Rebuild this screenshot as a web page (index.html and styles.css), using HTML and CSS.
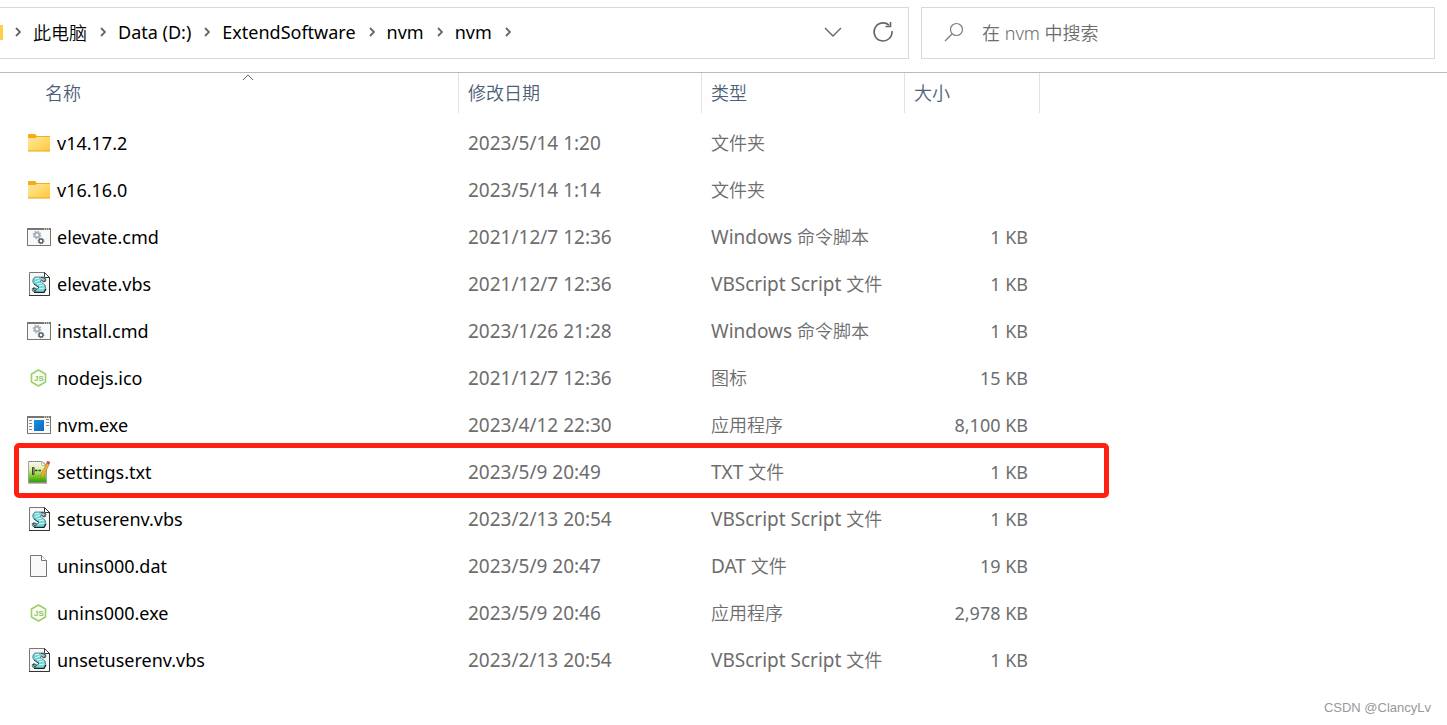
FILE: index.html
```html
<!DOCTYPE html>
<html lang="zh-CN">
<head>
<meta charset="utf-8">
<meta name="viewport" content="width=device-width, initial-scale=1">
<title>nvm</title>
<link rel="stylesheet" href="styles.css">
</head>
<body>
<svg class="sprite" aria-hidden="true">
  <defs>
    <linearGradient id="folder-fill" x1="0" y1="0" x2="1" y2="1">
      <stop offset="0" stop-color="#ffe9a3"/><stop offset="1" stop-color="#ffc937"/>
    </linearGradient>
    <linearGradient id="exe-fill" x1="0" y1="0" x2="1" y2="1">
      <stop offset="0" stop-color="#1f8fe6"/><stop offset="1" stop-color="#0b66b8"/>
    </linearGradient>
    <linearGradient id="note-fill" x1="0" y1="0" x2="0" y2="1">
      <stop offset="0" stop-color="#f8faf2"/><stop offset=".35" stop-color="#e0efb0"/><stop offset=".65" stop-color="#8ad02f"/><stop offset="1" stop-color="#2c9a0c"/>
    </linearGradient>
  </defs>
  <symbol id="folder" viewBox="0 0 24 24">
    <path d="M1 4Q1 3 2 3H8L10 5H23V10H1Z" fill="#f5ad17"/>
    <path d="M1 7H8L10 6H23V20H1Z" fill="url(#folder-fill)"/>
    <path d="M1 19.5H23V20.5H1Z" fill="#e5a41b"/>
  </symbol>
  <symbol id="cmd" viewBox="0 0 24 24">
    <rect x=".5" y="3.5" width="23" height="17" fill="#f9f9f9" stroke="#777770"/>
    <path d="M0 3H24V5H0Z" fill="#777770"/>
    <path d="M17 4H18M19 4H20M21 4H22" stroke="#fff"/>
    <circle cx="10" cy="10" r="2.4" fill="none" stroke="#a3adb7" stroke-width="1.8"/>
    <circle cx="10" cy="10" r="3.7" fill="none" stroke="#a3adb7" stroke-width="1.2" stroke-dasharray="1.5 1.4"/>
    <circle cx="14" cy="16" r="2" fill="none" stroke="#55606b" stroke-width="1.4"/>
    <circle cx="14" cy="16" r="2.9" fill="none" stroke="#55606b" stroke-width=".8" stroke-dasharray="1.1 1.18"/>
  </symbol>
  <symbol id="vbs" viewBox="0 0 24 24">
    <path d="M2.5.5H17.5L22.5 5.5V23.5H2.5Z" fill="#f8f8f8" stroke="#777"/>
    <path d="M22.5 5V23.5H2" fill="none" stroke="#333"/>
    <path d="M17.5.5V5.5H22.5Z" fill="#fff" stroke="#333"/>
    <path d="M8 5H16Q19 5 19 8Q19 10 17 10L15 8.5L13 9.5L18 13Q20 16 17 20H8Q5 20 5 17Q6 15 8 16L10 17L12 15.5L7 12Q4 8 8 5Z" fill="#67d8da" stroke="#596b6d" stroke-width=".8"/>
    <path d="M8 7L12 6M8 10L13 8M10 12L15 11M12 14L17 13M12 17L17 16" stroke="#dffcff"/>
    <path d="M14 5.5Q17 5 18.5 7.5L17 10L14.5 8M6 16.5Q7.5 15.5 9.5 17.5L8 19.5Z" fill="#b9b9b9" stroke="#303a3c" stroke-width=".9"/>
    <path d="M7 20.5H17L19 17" fill="none" stroke="#172023" stroke-width="1.2"/>
    <path d="M7 12L12 15.5" stroke="#172023" stroke-width=".7"/>
  </symbol>
  <symbol id="exe" viewBox="0 0 24 24">
    <rect x=".5" y="3.5" width="23" height="17" fill="#f9f9f9" stroke="#777770"/>
    <path d="M0 3H24V5H0Z" fill="#777770"/>
    <path d="M17 4H18M19 4H20M21 4H22" stroke="#fff"/>
    <rect x="7" y="7" width="10" height="11" fill="url(#exe-fill)"/>
    <path d="M2 7.5H5M2 10.5H5M2 13.5H5M2 16.5H5M19 6.5H22M19 9.5H22M19 12.5H22" stroke="#8a8a8a"/>
  </symbol>
  <symbol id="note" viewBox="0 0 24 24">
    <path d="M1.5 1.5H15L19.5 5V22.5H1.5Z" fill="url(#note-fill)" stroke="#a2a69c"/>
    <path d="M2 1.5H14" stroke="#777" stroke-dasharray="1 1"/>
    <path d="M14 1.5L15 5.5H19Z" fill="#fff" stroke="#aaa" stroke-width=".8"/>
    <path d="M1 23H20" stroke="#777"/>
    <path d="M7 7.5H5.5V14.5H7Z" fill="none" stroke="#383b32"/>
    <path d="M8 10.5H10.5M11.5 10.5H14" stroke="#383b32" stroke-width="1.3"/>
    <path d="M20.5 1.5L23 2.5L16.5 16L14 18.5V15Z" fill="#f3b32d" stroke="#ad6f18" stroke-width=".6"/>
    <path d="M20.5 1L23 2L22 4.5L19.5 3Z" fill="#a85550"/>
  </symbol>
  <symbol id="page" viewBox="0 0 24 24">
    <path d="M3.5 1.5H14.5L19.5 6.5V22.5H3.5Z" fill="#f9f9f9" stroke="#77776f"/>
    <path d="M14.5 1.5V6.5H19.5" fill="#fff" stroke="#77776f"/>
  </symbol>
  <symbol id="chevron" viewBox="0 0 6 10">
    <path d="M1 1L5 5L1 9" fill="none" stroke="#666" stroke-width="1.8"/>
  </symbol>
</svg>

<header class="toolbar">
  <nav class="address" aria-label="路径">
    <span class="root"></span>
    <ol class="crumbs">
      <li><svg class="sep"><use href="#chevron"/></svg><button class="crumb"><span class="zh">此电脑</span></button></li>
      <li><svg class="sep"><use href="#chevron"/></svg><button class="crumb">Data (D:)</button></li>
      <li><svg class="sep"><use href="#chevron"/></svg><button class="crumb">ExtendSoftware</button></li>
      <li><svg class="sep"><use href="#chevron"/></svg><button class="crumb">nvm</button></li>
      <li><svg class="sep"><use href="#chevron"/></svg><button class="crumb">nvm</button></li>
      <li><svg class="sep"><use href="#chevron"/></svg></li>
    </ol>
    <button class="tool" aria-label="历史记录">
      <svg width="24" height="24" viewBox="0 0 24 24"><path d="M4 8L12 16L20 8" fill="none" stroke="#666" stroke-width="1.4"/></svg>
    </button>
    <button class="tool" aria-label="刷新">
      <svg width="24" height="24" viewBox="0 0 24 24" fill="none" stroke="#666" stroke-width="1.6"><path d="M18 5.2A9 9 0 1 0 21 11"/><path d="M19.5 2V6.5H14.5"/></svg>
    </button>
  </nav>
  <label class="search">
    <svg width="24" height="24" viewBox="0 0 24 24" fill="none" stroke="#7c7c80" stroke-width="1.2"><circle cx="14.5" cy="8.5" r="6"/><path d="M10 13L3 20"/></svg>
    <input class="query" type="text" placeholder="在 nvm 中搜索" aria-label="搜索">
  </label>
</header>

<main class="listing">
  <table class="files">
    <colgroup><col class="col-name"><col class="col-date"><col class="col-type"><col class="col-size"></colgroup>
    <thead>
      <tr>
        <th aria-sort="ascending"><div class="head head-name">名称<svg class="sort" width="12" height="7" viewBox="0 0 12 7"><path d="M1 6L6 1L11 6" fill="none" stroke="#666"/></svg></div></th>
        <th><div class="head">修改日期</div></th>
        <th><div class="head">类型</div></th>
        <th><div class="head">大小</div></th>
      </tr>
    </thead>
    <tbody>
      <tr><td><div class="file"><svg class="icon"><use href="#folder"/></svg>v14.17.2</div></td><td>2023/5/14 1:20</td><td><span class="zh">文件夹</span></td><td></td></tr>
      <tr><td><div class="file"><svg class="icon"><use href="#folder"/></svg>v16.16.0</div></td><td>2023/5/14 1:14</td><td><span class="zh">文件夹</span></td><td></td></tr>
      <tr><td><div class="file"><svg class="icon"><use href="#cmd"/></svg>elevate.cmd</div></td><td>2021/12/7 12:36</td><td>Windows <span class="zh">命令脚本</span></td><td>1 KB</td></tr>
      <tr><td><div class="file"><svg class="icon"><use href="#vbs"/></svg>elevate.vbs</div></td><td>2021/12/7 12:36</td><td>VBScript Script <span class="zh">文件</span></td><td>1 KB</td></tr>
      <tr><td><div class="file"><svg class="icon"><use href="#cmd"/></svg>install.cmd</div></td><td>2023/1/26 21:28</td><td>Windows <span class="zh">命令脚本</span></td><td>1 KB</td></tr>
      <tr><td><div class="file"><svg class="icon" viewBox="0 0 24 24"><path d="M11.5 4L18.5 8V16L11.5 20L4.5 16V8Z" class="node-hex"/><text x="7" y="15" class="node-mark">JS</text></svg>nodejs.ico</div></td><td>2021/12/7 12:36</td><td><span class="zh">图标</span></td><td>15 KB</td></tr>
      <tr><td><div class="file"><svg class="icon"><use href="#exe"/></svg>nvm.exe</div></td><td>2023/4/12 22:30</td><td><span class="zh">应用程序</span></td><td>8,100 KB</td></tr>
      <tr class="marked"><td><div class="file"><svg class="icon"><use href="#note"/></svg>settings.txt</div></td><td>2023/5/9 20:49</td><td>TXT <span class="zh">文件</span></td><td>1 KB</td></tr>
      <tr><td><div class="file"><svg class="icon"><use href="#vbs"/></svg>setuserenv.vbs</div></td><td>2023/2/13 20:54</td><td>VBScript Script <span class="zh">文件</span></td><td>1 KB</td></tr>
      <tr><td><div class="file"><svg class="icon"><use href="#page"/></svg>unins000.dat</div></td><td>2023/5/9 20:47</td><td>DAT <span class="zh">文件</span></td><td>19 KB</td></tr>
      <tr><td><div class="file"><svg class="icon" viewBox="0 0 24 24"><path d="M11.5 4L18.5 8V16L11.5 20L4.5 16V8Z" class="node-hex"/><text x="7" y="15" class="node-mark">JS</text></svg>unins000.exe</div></td><td>2023/5/9 20:46</td><td><span class="zh">应用程序</span></td><td>2,978 KB</td></tr>
      <tr><td><div class="file"><svg class="icon"><use href="#vbs"/></svg>unsetuserenv.vbs</div></td><td>2023/2/13 20:54</td><td>VBScript Script <span class="zh">文件</span></td><td>1 KB</td></tr>
    </tbody>
  </table>
</main>
<footer class="credit">CSDN @ClancyLv</footer>
</body>
</html>
```
FILE: styles.css
```css
* {
  box-sizing: border-box;
}

body {
  display: flex;
  flex-direction: column;
  min-height: 100vh;
  margin: 0;
  background: #fff;
  color: #000;
  font-family: "Noto Sans", "Noto Sans CJK SC", sans-serif;
  font-size: 18px;
  line-height: 24px;
}

button {
  padding: 0;
  border: 0;
  background: none;
  color: inherit;
  font: inherit;
}

svg {
  flex: none;
}

.sprite {
  position: absolute;
  width: 0;
  height: 0;
}

.zh {
  font-family: "Noto Sans CJK SC", sans-serif;
  font-size: 18px;
  font-weight: 350;
}

.toolbar {
  display: grid;
  grid-template-columns: 909fr 514fr;
  gap: 12px;
  padding: 7px 12px 13px 0;
  border-bottom: 1px solid #bbb;
}

.address,
.search {
  display: flex;
  align-items: center;
  height: 52px;
  border: 1px solid #d9d9d9;
}

.address {
  border-left: 0;
  padding: 0 13px 2px 0;
}

.root {
  width: 3px;
  height: 15px;
  background: #ffcf48;
}

.crumbs {
  display: flex;
  flex: 1;
  margin: 0;
  padding: 0 0 0 12px;
  list-style: none;
}

.crumbs li {
  display: flex;
  align-items: center;
}

.sep {
  width: 6px;
  height: 10px;
}

.crumb {
  margin: 0 13px 0 12px;
  white-space: nowrap;
}

.tool {
  display: flex;
  margin-left: 26px;
}

.search {
  gap: 16px;
  padding-left: 20px;
}

.query {
  flex: 1;
  min-width: 0;
  padding: 0;
  border: 0;
  outline: 0;
  font: inherit;
}

.query::placeholder {
  color: #6d6d6d;
  font-weight: 350;
  opacity: 1;
}

.files {
  table-layout: fixed;
  width: 1040px;
  border-collapse: collapse;
}

.col-name {
  width: 459px;
}

.col-date {
  width: 243px;
}

.col-type {
  width: 203px;
}

.col-size {
  width: 135px;
}

.files th {
  height: 47px;
  padding: 0;
  text-align: left;
  vertical-align: top;
}

.head {
  position: relative;
  height: 40px;
  padding: 7px 9px;
  border-right: 1px solid #e2e2e2;
  color: #4c607a;
  font-family: "Noto Sans CJK SC", sans-serif;
  font-weight: 350;
}

.head-name {
  padding-left: 45px;
}

.sort {
  position: absolute;
  top: 1px;
  left: 242px;
}

.files td {
  height: 47px;
  padding: 0 9px 2px;
  color: #6d6d6d;
  white-space: nowrap;
}

.files td:nth-child(2),
.files td:nth-child(3) {
  font-size: 19px;
}

.files td:first-child {
  padding-left: 27px;
  color: #000;
}

.files td:last-child {
  padding-right: 12px;
  text-align: right;
}

.file {
  display: flex;
  align-items: center;
  gap: 6px;
}

.icon {
  width: 24px;
  height: 24px;
}

.node-hex {
  fill: #fbfef7;
  stroke: #9bd069;
  stroke-width: 1.6px;
  stroke-linejoin: round;
}

.node-mark {
  fill: #8cc657;
  font: bold 8px "Liberation Sans", sans-serif;
}

.marked {
  position: relative;
}

.marked::after {
  content: "";
  position: absolute;
  inset: -6px -69px -2px 14px;
  border: 5px solid #ff2012;
  border-radius: 5px;
}

.credit {
  margin-top: auto;
  padding: 0 16px 8px;
  color: #999;
  font: 13px/18px "Liberation Sans", sans-serif;
  text-align: right;
}
```
